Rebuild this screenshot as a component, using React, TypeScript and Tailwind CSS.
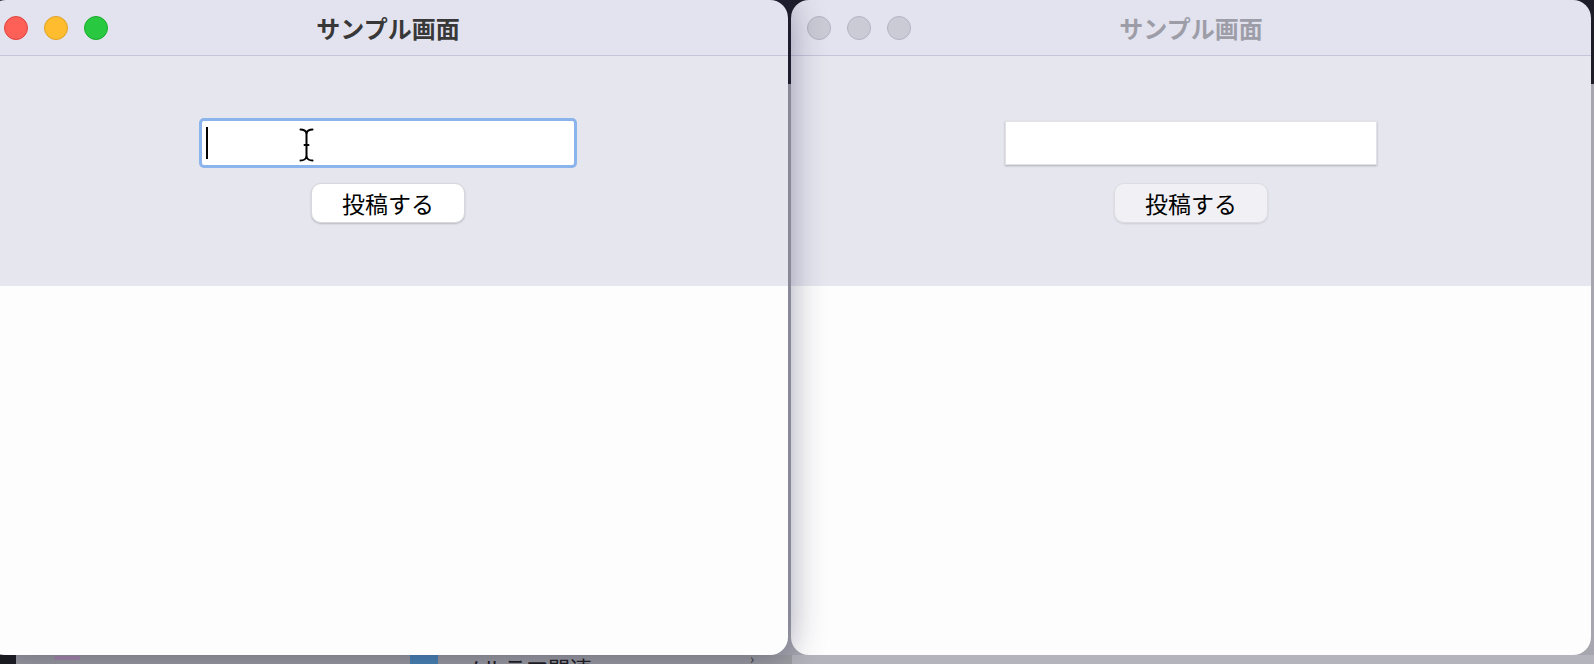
import clsx from "clsx";

const jp = "font-['Noto_Sans_CJK_JP','Noto_Sans',sans-serif]";

function TrafficLights({ active }: { active: boolean }) {
  const dots = active
    ? [
        "bg-[#fe5f57] border-[#e0443e]",
        "bg-[#febc2e] border-[#dea123]",
        "bg-[#28c840] border-[#1aab29]",
      ]
    : [
        "bg-[#cbcbd5] border-[#b3b3c3]",
        "bg-[#cbcbd5] border-[#b3b3c3]",
        "bg-[#cbcbd5] border-[#b3b3c3]",
      ];
  return (
    <div className="flex items-center gap-4">
      {dots.map((c, i) => (
        <span key={i} className={clsx("h-6 w-6 rounded-full border", c)} />
      ))}
    </div>
  );
}

function IBeam() {
  return (
    <svg
      className="absolute left-[97px] top-[7px]"
      width="15"
      height="34"
      viewBox="0 0 15 34"
      fill="none"
      stroke="#000"
      strokeWidth="2"
      strokeLinecap="round"
    >
      <path d="M1.5 1.5 C4.5 1.5 6.5 2.5 7.5 5 C8.5 2.5 10.5 1.5 13.5 1.5" />
      <path d="M7.5 5 V29" />
      <path d="M5.5 17 H9.5" />
      <path d="M1.5 32.5 C4.5 32.5 6.5 31.5 7.5 29 C8.5 31.5 10.5 32.5 13.5 32.5" />
    </svg>
  );
}

function SampleWindow({ active }: { active: boolean }) {
  return (
    <div
      className={clsx(
        "flex h-[655px] w-[800px] shrink-0 flex-col overflow-hidden rounded-[18px]",
        active
          ? "relative z-10 ml-[-12px] shadow-[0_0_36px_rgba(30,30,70,0.45)]"
          : "ml-[3px]"
      )}
    >
      <div className="grid h-14 grid-cols-[1fr_auto_1fr] items-center border-b border-[#c4c4da] bg-[#e3e3ef] px-4">
        <TrafficLights active={active} />
        <h1
          className={clsx(
            jp,
            "text-[24px] font-bold leading-none",
            active ? "text-[#383838]" : "text-[#9d9da8]"
          )}
        >
          サンプル画面
        </h1>
        <span />
      </div>

      <div className="flex h-[230px] flex-col items-center bg-[#e6e6ef] pt-[65px]">
        <div
          className={clsx(
            "relative h-[44px] w-[372px] bg-white",
            active
              ? "rounded-[2px] ring-[3px] ring-[#8cb4ec]"
              : "border border-[#e2e2e6] shadow-[0_1px_2px_rgba(0,0,0,0.25)]"
          )}
        >
          {active && (
            <>
              <span className="absolute left-[4px] top-[6px] h-[32px] w-[2px] bg-black" />
              <IBeam />
            </>
          )}
        </div>
        <button
          type="button"
          className={clsx(
            jp,
            "mt-[18px] h-10 w-[154px] rounded-[10px] border text-[23px] leading-none text-black",
            active
              ? "border-[#d8d8dc] bg-white shadow-[0_1px_2px_rgba(0,0,0,0.2)]"
              : "border-[#dcdce2] bg-white/40 shadow-[0_1px_2px_rgba(0,0,0,0.12)]"
          )}
        >
          投稿する
        </button>
      </div>

      <div className="flex-1 bg-[#fdfdfd]" />
    </div>
  );
}

export default function App() {
  return (
    <div className="flex h-[664px] w-[1594px] flex-col overflow-hidden bg-[linear-gradient(to_bottom,#1d1d29_0,#1d1d29_84px,#a6a6ae_84px)]">
      <div className="flex h-[655px] shrink-0 items-start">
        <SampleWindow active />
        <SampleWindow active={false} />
      </div>

      <div className="flex h-[9px] shrink-0 items-start overflow-hidden bg-[#9e9ea2]">
        <span className="h-full w-4 bg-[#1a1a1c]" />
        <span className="ml-[38px] mt-[1px] h-[4px] w-[26px] rounded-sm bg-[#a98aaa]" />
        <span className="ml-[330px] h-full w-[28px] bg-[#4a86b6]" />
        <span className={clsx(jp, "ml-[22px] mt-[1px] text-[22px] leading-none text-[#1c1c1c]")}>
          ノルテマ関連
        </span>
        <span className={clsx(jp, "ml-[158px] mt-[-4px] text-[14px] leading-none text-[#333]")}>
          ›
        </span>
        <span className="ml-[38px] h-full flex-1 bg-[#b4b4bc]" />
      </div>
    </div>
  );
}
